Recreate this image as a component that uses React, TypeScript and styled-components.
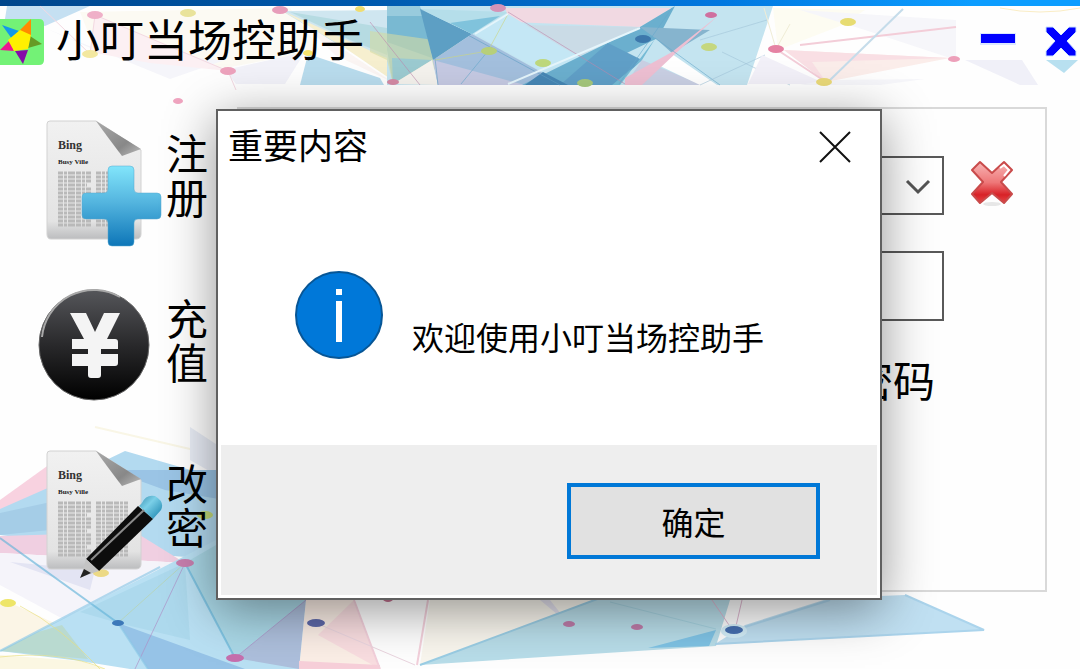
import React from 'react';
import styled, { createGlobalStyle } from 'styled-components';

const GlobalStyle = createGlobalStyle`
  * { box-sizing: border-box; }
  body { margin: 0; background: #fff; }
  button, input, select { font: inherit; color: inherit; }
  button { background: none; border: 0; padding: 0; cursor: pointer; }
`;

const Page = styled.div`
  position: relative;
  min-height: 100vh;
  overflow: hidden;
  display: flex;
  flex-direction: column;
  background: #fefefe;
  color: #000;
  font-family: 'Liberation Sans', 'Noto Sans CJK SC', sans-serif;
`;

const TopEdge = styled.div`
  height: 6px;
  background: linear-gradient(90deg, #00468c, #0059ad 34%, #0078e0 67%, #0c9dff 90%);
`;

const TitleBar = styled.header`
  position: relative;
  height: 79px;
  display: flex;
  align-items: flex-start;
  justify-content: space-between;
`;

const HeaderArt = styled.svg`
  position: absolute;
  inset: 0;
  width: 100%;
  height: 79px;
  overflow: visible;
`;

const Brand = styled.div`
  position: relative;
  display: flex;
  align-items: center;
  gap: 12px;
  height: 72px;
`;

const AppTitle = styled.h1`
  margin: 0;
  font-size: 44px;
  line-height: 44px;
  font-weight: 400;
`;

const WindowControls = styled.div`
  position: relative;
  display: flex;
  align-items: center;
  gap: 28px;
  height: 72px;
  padding-right: 2px;
`;

const IconButton = styled.button`
  display: flex;
`;

const Body = styled.div`
  flex: 1;
  display: flex;
  align-items: flex-start;
`;

const FloorArt = styled.svg`
  position: absolute;
  left: 0;
  bottom: 0;
  width: 100%;
  height: 249px;
`;

const Sidebar = styled.nav`
  position: relative;
  display: flex;
  flex-direction: column;
  gap: 35px;
  padding: 28px 0 0 38px;
`;

const SideButton = styled.button`
  display: flex;
  align-items: center;
  gap: 4px;
  height: 130px;
`;

const SideIcon = styled.svg`
  width: 124px;
  height: 130px;
  overflow: visible;
`;

const SideLabel = styled.span`
  width: 42px;
  font-size: 42px;
  line-height: 44px;
  font-weight: 400;
`;

const Panel = styled.form`
  position: relative;
  flex: 1;
  min-height: 485px;
  margin: 22px 33px 0 29px;
  padding: 47px 32px 0 90px;
  border: 2px solid #d9d9d9;
  background: #fefefe;
  display: grid;
  grid-template-columns: 1fr 42px;
  grid-template-rows: 59px 70px 44px;
  column-gap: 27px;
  row-gap: 36px;
`;

const SelectWrap = styled.div`
  position: relative;
  display: flex;
`;

const AccountSelect = styled.select`
  flex: 1;
  appearance: none;
  border: 2px solid #595959;
  border-radius: 0;
  background: #fff;
`;

const Chevron = styled.svg`
  position: absolute;
  right: 13px;
  top: 23px;
  pointer-events: none;
`;

const PasswordInput = styled.input`
  grid-column: 1;
  min-width: 0;
  border: 2px solid #595959;
  background: #fff;
`;

const PasswordLabel = styled.label`
  grid-column: 1;
  justify-self: end;
  padding-right: 9px;
  font-size: 42px;
  line-height: 52px;
  font-weight: 400;
`;

const Overlay = styled.div`
  position: absolute;
  inset: 0;
  display: flex;
  align-items: flex-start;
  padding: 109px 198px 0 216px;
`;

const Dialog = styled.section`
  flex: 1;
  border: 2px solid #606060;
  padding: 0 3px 3px;
  background: #fff;
  box-shadow: 0 10px 48px rgba(0, 0, 0, 0.42);
`;

const DialogHeader = styled.div`
  display: flex;
  align-items: center;
  justify-content: space-between;
  height: 72px;
  padding: 0 25px 0 7px;
`;

const DialogTitle = styled.h2`
  margin: 0;
  font-size: 35px;
  line-height: 44px;
  font-weight: 400;
`;

const DialogBody = styled.div`
  display: flex;
  align-items: flex-start;
  gap: 28px;
  height: 262px;
  padding: 88px 0 0 74px;
`;

const Message = styled.p`
  margin: 0;
  padding-top: 46px;
  font-size: 32px;
  line-height: 44px;
`;

const DialogFooter = styled.div`
  display: flex;
  justify-content: flex-end;
  height: 150px;
  padding: 38px 57px 0;
  background: #eee;
`;

const ConfirmButton = styled.button`
  width: 253px;
  height: 76px;
  border: 4px solid #0078d7;
  background: #e1e1e1;
  font-size: 32px;
`;

type Dot = [number, number, string, number?];

const headerDots: Dot[] = [
  [95, 15, '#efb0c8'], [188, 13, '#e9e39b'], [280, 10, '#e79dba'], [360, 9, '#f0dd70', 5],
  [90, 54, '#f3e8a0'], [308, 53, '#f3e36f', 5], [228, 71, '#eda3bd'], [178, 101, '#f0a5c0', 5],
  [498, 8, '#d493b7'], [393, 82, '#d48aa5', 6], [489, 51, '#b7cf79'], [543, 63, '#bed87d'],
  [585, 83, '#a5c77c'], [643, 39, '#3d78ac'], [711, 15, '#cf6f9f', 6], [709, 47, '#c5d77f'],
  [776, 49, '#e582a3'], [848, 22, '#e7dc72'], [824, 82, '#ead979'], [954, 59, '#eda0ba', 6],
];

const floorDots: Dot[] = [
  [8, 603, '#eee568'], [101, 573, '#ecd985'], [205, 515, '#c4d978'], [185, 563, '#c77fae', 9],
  [118, 623, '#3c78b9', 6], [235, 658, '#c66fae', 9], [316, 623, '#5d68a8', 9],
  [388, 599, '#c06f8d', 5], [569, 624, '#bd7ba8', 6], [637, 627, '#bd7ba8', 6], [734, 630, '#466fb0', 9],
];

const Dots = ({ items }: { items: Dot[] }) => (
  <>
    {items.map(([x, y, fill, r = 8]) => (
      <ellipse key={`${x}-${y}`} cx={x} cy={y} rx={r} ry={r > 6 ? 4 : 3} fill={fill} />
    ))}
  </>
);

const HeaderPattern = () => (
  <HeaderArt viewBox="0 6 1080 79" preserveAspectRatio="none" aria-hidden="true">
    <path d="M7 6H90L45 26L5 19Z" fill="#c5e0f2" />
    <path d="M80 12L290 8L320 50L225 68L95 50Z" fill="#fcfaf3" />
    <path d="M45 28L95 50L225 60L170 79Z" fill="#f5f5fa" />
    <path d="M95 15L228 71L150 63L90 52Z" fill="#fcf0f3" />
    <path d="M225 70L305 52L285 84H236Z" fill="#f2f2f9" />
    <path d="M40 6L90 54M95 15L228 71L236 90M95 15L90 54" stroke="#f3d9e2" fill="none" />
    <path d="M282 11L395 10V60L340 46Z" fill="#cfe6f0" />
    <path d="M290 12L387 28V55L350 40Z" fill="#b6dbe2" />
    <path d="M283 11L395 62V82L345 48Z" fill="#f6efcf" />
    <path d="M300 20L392 82L335 55Z" fill="#fbf5f3" />
    <path d="M308 54L380 78L384 85H300Z" fill="#b9dced" />
    <path d="M387 6H773L747 85H387Z" fill="#c4e4f0" />
    <path d="M387 6H420L435 58L393 84L387 50Z" fill="#98cbdd" />
    <path d="M387 16H423L432 58L387 42Z" fill="#79b9d2" />
    <path d="M370 31L455 43L488 51L393 84L387 60L370 52Z" fill="#d3dba4" opacity=".6" />
    <path d="M392 58L432 60L393 84Z" fill="#9bcad0" />
    <path d="M393 84L432 60L438 85Z" fill="#f4f2ed" />
    <path d="M420 9L472 34L433 60Z" fill="#5d9fc4" />
    <path d="M472 34L433 60L438 85H560L543 73Z" fill="#a3bfdd" />
    <path d="M433 60L525 85H438Z" fill="#c5c9e2" />
    <path d="M420 9L508 12L472 34Z" fill="#b5deea" />
    <path d="M450 23L500 16L472 34Z" fill="#80c3dc" />
    <path d="M505 8H672L640 27L510 22Z" fill="#f1d9e2" />
    <path d="M515 25L640 27L580 56Z" fill="#cadbe6" />
    <path d="M475 34L508 14L580 58L543 72Z" fill="#c4e7f5" />
    <path d="M640 27L675 6L658 38L560 85H522Z" fill="#6bafce" />
    <path d="M608 43L642 60L615 85H560Z" fill="#609fc7" />
    <path d="M642 60L655 39L620 85H612Z" fill="#75bbd5" />
    <path d="M640 27L710 30L672 53L655 38Z" fill="#86b4ce" />
    <path d="M642 60L702 85H625Z" fill="#c9cfe3" />
    <path d="M672 54L717 85H700L660 66Z" fill="#fff" />
    <path d="M719 15L672 52L625 78V85H642L676 53Z" fill="#edbfd2" />
    <path d="M543 72L568 85H525Z" fill="#4686b4" />
    <g strokeWidth="1" strokeOpacity=".6" fill="none">
      <path d="M420 9L560 85M435 58L438 85" stroke="#5f9fc4" />
      <path d="M508 12L625 84M370 22L420 85" stroke="#bd88ad" />
      <path d="M488 51L461 84M655 38L720 85M672 8L619 84" stroke="#66a9cb" />
      <path d="M508 14L488 51L435 60" stroke="#ccd67f" />
      <path d="M700 85L765 55M700 40L767 20M722 52L790 85" stroke="#a1c4d8" />
    </g>
    <path d="M475 34L508 14M508 84L640 28" stroke="#e5f5fb" strokeWidth="2" fill="none" />
    <path d="M773 8L865 10L840 26L778 50Z" fill="#fdfcf2" />
    <path d="M800 10L956 20V60L865 30Z" fill="#f6f6fa" />
    <path d="M762 55L826 84H748Z" fill="#f2f0f8" />
    <path d="M826 80L925 79L880 85H800Z" fill="#f6f6fa" />
    <path d="M784 50L826 82L950 58Z" fill="#fbedea" />
    <path d="M784 50L826 82L812 62L950 58Z" fill="#f9dfe4" />
    <path d="M776 49L826 82M956 27L800 45" stroke="#f3cdd8" strokeWidth="2" fill="none" />
    <path d="M903 9L828 82" stroke="#c5dcea" strokeWidth="2" />
    <path d="M764 8L776 49L790 24" stroke="#f0edd6" fill="none" />
    <path d="M965 60H1022L1038 85H1020Z" fill="#f0f0f8" />
    <path d="M1046 60H1078L1064 73Z" fill="#b8e0f0" />
    <path d="M1000 8Q1040 16 1080 8" stroke="#faedc5" fill="none" />
    <Dots items={headerDots} />
  </HeaderArt>
);

const FloorPattern = () => (
  <FloorArt viewBox="0 420 1080 249" preserveAspectRatio="none" aria-hidden="true">
    <path d="M95 427L216 455" stroke="#f9f6e6" strokeWidth="2" />
    <path d="M190 427L225 450V480L190 460Z" fill="#e9edf6" />
    <path d="M0 500L50 464V490L0 515Z" fill="#f8d2e0" />
    <path d="M0 509L50 487L125 451L225 480V560L160 555L0 535Z" fill="#b3daf0" />
    <path d="M110 470H225V500L165 490Z" fill="#9ac4e5" />
    <path d="M0 513L60 500L50 530L0 535Z" fill="#a5cde7" />
    <path d="M0 536L135 532L185 563L0 553Z" fill="#f0cfe1" />
    <path d="M0 553L185 563L65 620L0 585Z" fill="#f5f4fa" />
    <path d="M10 562L95 570L90 590Z" fill="#e3e4f3" />
    <path d="M0 603L15 605L65 628L0 650Z" fill="#fbf5e6" />
    <path d="M0 651L216 540L320 600L299 669H130L80 661Z" fill="#b9e0f3" />
    <path d="M80 612L185 563L190 640L118 623Z" fill="#add9ed" />
    <path d="M0 651L38 632L62 625L88 659Z" fill="#b9dad0" />
    <path d="M0 655L80 661L105 669H0Z" fill="#fbf7e2" />
    <path d="M185 563L235 658L310 598L216 545Z" fill="#a9d7e6" />
    <path d="M118 623L245 669H148Z" fill="#96c3e7" />
    <path d="M306 600L299 669L235 658Z" fill="#adbfdc" />
    <g strokeOpacity=".65" fill="none">
      <path d="M185 563L235 658M0 538L118 623" stroke="#64b3d8" strokeWidth="2" />
      <path d="M185 563L135 669M235 658L306 600" stroke="#ad8dc4" />
      <path d="M118 623L185 563" stroke="#b8d3a9" />
      <path d="M0 651L160 567M118 623L148 669" stroke="#8cc8e7" strokeWidth="2" />
      <path d="M20 606Q60 626 100 669M0 657Q60 650 105 669" stroke="#e9de7c" />
    </g>
    <path d="M306 600L354 600L380 669H299Z" fill="#fbeee6" />
    <path d="M354 600L380 669L318 635Z" fill="#f9dde0" />
    <path d="M299 661L380 665V669H299Z" fill="#f7cfd9" />
    <path d="M354 600L380 669M428 600L417 665" stroke="#f3d0db" strokeWidth="2" fill="none" />
    <path d="M316 623L415 665" stroke="#ead5df" fill="none" />
    <path d="M430 600H600L420 665Z" fill="#f9f6ee" />
    <path d="M540 600L569 624L550 600" fill="#e4e2ee" />
    <path d="M600 598L420 665L716 646L730 600Z" fill="#b8dde9" />
    <path d="M600 598L420 665" stroke="#9acde4" strokeWidth="2" />
    <path d="M610 602L716 629" stroke="#a5d2e0" />
    <path d="M648 648L716 630L709 646Z" fill="#7fc3e5" />
    <path d="M715 644L745 625L830 598L905 595L984 630Z" fill="#c0e0f2" />
    <path d="M745 627L830 600M905 595L984 630L715 644" stroke="#abd4ec" strokeWidth="2" fill="none" />
    <path d="M712 600L729 625M742 600L736 626" stroke="#deb6cf" fill="none" />
    <ellipse cx="734" cy="631" rx="13" ry="7" fill="#d3edf8" />
    <Dots items={floorDots} />
  </FloorArt>
);

const StarLogo = () => (
  <svg width="44" height="47" viewBox="0 18 44 47" aria-hidden="true">
    <path d="M0 18H39Q44 18 44 23V59Q44 64 39 64H0Z" fill="#73f276" />
    <path d="M2 24L19 30L12 38Z" fill="#1598e8" />
    <path d="M31 18L31 38L19 30Z" fill="#ff8a00" />
    <path d="M30 35L42 43L28 47Z" fill="#669b24" />
    <path d="M15 50L28 49L23 63Z" fill="#850ba8" />
    <path d="M0 49L10 39L14 50Z" fill="#ed168f" />
    <path d="M20 29L31 34L28 48L14 50L8 39Z" fill="#fff000" />
  </svg>
);

const Paper = () => (
  <>
    <defs>
      <linearGradient id="paper" x1="0" y1="0" x2="0" y2="1">
        <stop offset="0" stopColor="#f1f1f1" />
        <stop offset=".85" stopColor="#e3e3e3" />
        <stop offset="1" stopColor="#bcbdbf" />
      </linearGradient>
      <linearGradient id="fold" x1="0" y1="0" x2="1" y2="1">
        <stop offset="0" stopColor="#a9a9a9" />
        <stop offset=".65" stopColor="#888" />
        <stop offset="1" stopColor="#bbb" />
      </linearGradient>
    </defs>
    <path d="M12 8H58L103 37V121Q103 126 98 126H13Q9 126 9 121V11Q9 8 12 8Z" fill="url(#paper)" stroke="#d2d2d2" />
    <path d="M58 8Q68 22 84 43L103 36Z" fill="url(#fold)" />
    <text x="20" y="36" fontFamily="Liberation Serif, serif" fontSize="12" fontWeight="700" fill="#333">Bing</text>
    <text x="20" y="51" fontFamily="Liberation Serif, serif" fontSize="7" fontWeight="700" fill="#222">Busy Ville</text>
    <g stroke="#b9b9b9" strokeWidth="3" strokeDasharray="5 1 3 1 7 1">
      {Array.from({ length: 14 }, (_, i) => (
        <path key={i} d={`M${20} ${60 + i * 4}H${i % 4 === 3 ? 49 : 53}M58 ${60 + i * 4}H90`} />
      ))}
    </g>
  </>
);

const RegisterIcon = () => (
  <SideIcon viewBox="0 0 124 130" aria-hidden="true">
    <Paper />
    <defs>
      <linearGradient id="plus" x1="0" y1="0" x2="0" y2="1">
        <stop offset="0" stopColor="#82e5fb" />
        <stop offset=".45" stopColor="#54b5df" />
        <stop offset="1" stopColor="#0d76b8" />
      </linearGradient>
    </defs>
    <path d="M74 53H92Q96 53 96 57V76Q96 80 100 80H119Q123 80 123 84V102Q123 106 119 106H100Q96 106 96 110V129Q96 133 92 133H74Q70 133 70 129V110Q70 106 66 106H48Q44 106 44 102V84Q44 80 48 80H66Q70 80 70 76V57Q70 53 74 53Z" fill="url(#plus)" stroke="#57a9cf" strokeOpacity=".5" />
  </SideIcon>
);

const RechargeIcon = () => (
  <SideIcon viewBox="0 0 124 130" aria-hidden="true">
    <defs>
      <linearGradient id="coin" x1="0" y1="0" x2="0" y2="1">
        <stop offset="0" stopColor="#55565a" />
        <stop offset=".5" stopColor="#29292b" />
        <stop offset="1" stopColor="#000" />
      </linearGradient>
    </defs>
    <circle cx="56" cy="67" r="55" fill="url(#coin)" stroke="#666" />
    <path d="M4 59A52 52 0 0 1 82 19" fill="none" stroke="#a8a8a8" strokeWidth="2" />
    <path d="M32 35H48L57 54L66 35H82L69 61H77Q80 61 80 64V71H63V76H80V85Q80 88 77 88H63V97Q63 100 60 100H53Q50 100 50 97V88H34V76H50V71H34V61H46Z" fill="#f4f4f4" />
  </SideIcon>
);

const EditIcon = () => (
  <SideIcon viewBox="0 0 124 130" aria-hidden="true">
    <Paper />
    <defs>
      <linearGradient id="cap" x1="0" y1="0" x2="1" y2="1">
        <stop offset="0" stopColor="#3a8fb0" />
        <stop offset=".4" stopColor="#7bd0e8" />
        <stop offset="1" stopColor="#1580ab" />
      </linearGradient>
    </defs>
    <path d="M104 60Q108 51 117 53Q127 59 123 67L115 76L101 63Z" fill="url(#cap)" />
    <path d="M100 63L115 76L61 128L48 116Z" fill="#0d0d0d" />
    <path d="M53 117L106 67" stroke="#8b8b8b" strokeWidth="2" />
    <path d="M48 116L61 128L43 134Z" fill="#c4c4c4" />
    <path d="M46 126L53 130L42 135Z" fill="#222" />
  </SideIcon>
);

const sideItems = [
  { label: '注册', Icon: RegisterIcon },
  { label: '充值', Icon: RechargeIcon },
  { label: '改密', Icon: EditIcon },
];

export default function App() {
  return (
    <Page>
      <GlobalStyle />
      <FloorPattern />
      <TopEdge />
      <TitleBar>
        <HeaderPattern />
        <Brand>
          <StarLogo />
          <AppTitle>小叮当场控助手</AppTitle>
        </Brand>
        <WindowControls>
          <IconButton aria-label="最小化">
            <svg width="36" height="18" viewBox="0 0 36 18">
              <path d="M0 0H36V12H0Z" fill="#dbe7ff" />
              <path d="M1 1H35V10H1Z" fill="#00f" />
            </svg>
          </IconButton>
          <IconButton aria-label="关闭">
            <svg width="34" height="32" viewBox="0 0 34 32">
              <path d="M2 1H9L17 9L25 1H32V6L23 15L32 25V30H25L17 22L9 30H2V25L11 15L2 6Z" fill="#00f" stroke="#cce3ff" />
            </svg>
          </IconButton>
        </WindowControls>
      </TitleBar>
      <Body>
        <Sidebar>
          {sideItems.map(({ label, Icon }) => (
            <SideButton key={label}>
              <Icon />
              <SideLabel>{label}</SideLabel>
            </SideButton>
          ))}
        </Sidebar>
        <Panel onSubmit={(e) => e.preventDefault()}>
          <SelectWrap>
            <AccountSelect aria-label="账号" />
            <Chevron width="26" height="16" viewBox="0 0 26 16">
              <path d="M2 2L13 13L24 2" fill="none" stroke="#555" strokeWidth="3" />
            </Chevron>
          </SelectWrap>
          <IconButton type="button" aria-label="清除">
            <svg width="42" height="52" viewBox="0 0 42 52">
              <defs>
                <linearGradient id="clear" x1="0" y1="0" x2="0" y2="1">
                  <stop offset="0" stopColor="#f8b5b5" />
                  <stop offset=".5" stopColor="#ee7778" />
                  <stop offset=".8" stopColor="#d82227" />
                  <stop offset="1" stopColor="#e64747" />
                </linearGradient>
              </defs>
              <ellipse cx="21" cy="48" rx="9" ry="2" fill="#e7e7e7" />
              <path d="M9 6L21 17L33 6L41 14L30 26L41 38L33 47L21 37L9 47L1 38L12 26L1 14Z" fill="url(#clear)" stroke="#c94b4b" strokeWidth="2" strokeLinejoin="round" />
              <path d="M29 12L33 9L38 14L33 20" fill="none" stroke="#fff" strokeWidth="2" />
            </svg>
          </IconButton>
          <PasswordInput id="password" type="password" />
          <PasswordLabel htmlFor="password">密码</PasswordLabel>
        </Panel>
      </Body>
      <Overlay>
        <Dialog role="dialog" aria-labelledby="dialog-title">
          <DialogHeader>
            <DialogTitle id="dialog-title">重要内容</DialogTitle>
            <IconButton aria-label="关闭">
              <svg width="34" height="34" viewBox="0 0 34 34">
                <path d="M2 2L32 32M32 2L2 32" stroke="#111" strokeWidth="2" />
              </svg>
            </IconButton>
          </DialogHeader>
          <DialogBody>
            <svg width="89" height="89" viewBox="0 0 89 89" aria-hidden="true">
              <circle cx="44" cy="44" r="43" fill="#0078d9" stroke="#075696" strokeWidth="2" />
              <path d="M41 18H47V24H41ZM41 30H47V71H41Z" fill="#fff" />
            </svg>
            <Message>欢迎使用小叮当场控助手</Message>
          </DialogBody>
          <DialogFooter>
            <ConfirmButton>确定</ConfirmButton>
          </DialogFooter>
        </Dialog>
      </Overlay>
    </Page>
  );
}
